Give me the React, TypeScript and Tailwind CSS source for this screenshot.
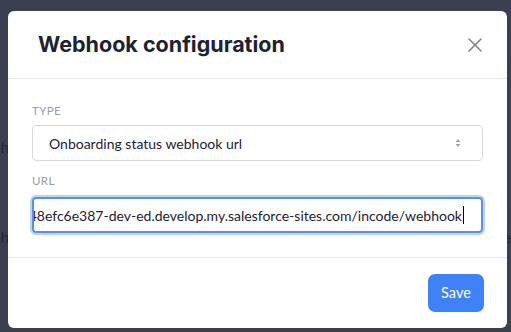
import React from "react"

const titleFont = { fontFamily: "Inter, 'Noto Sans', sans-serif" }
const bodyFont = { fontFamily: "Lato, 'Noto Sans', sans-serif" }

const ChevronUpDown: React.FC = () => (
  <svg width="8" height="12" viewBox="0 0 8 12" fill="#9ca3af">
    <path d="M4 2 L6.5 5 H1.5 Z" />
    <path d="M4 10 L6.5 7 H1.5 Z" />
  </svg>
)

const CloseIcon: React.FC = () => (
  <svg width="16" height="16" viewBox="0 0 16 16" fill="none" stroke="#80848f" strokeWidth="1.6" strokeLinecap="round">
    <path d="M2 2 L14 14 M14 2 L2 14" />
  </svg>
)

export default function App() {
  return (
    <div className="relative w-[511px] h-[332px] overflow-hidden bg-[#3b4051]" style={bodyFont}>
      {/* page behind the overlay */}
      <div className="absolute inset-0 text-[15px] text-[#222634]">
        <div className="absolute right-[502px] top-[136px]">Webh</div>
        <div className="absolute right-[502px] top-[226px]">Webh</div>
        <div className="absolute left-[503px] top-[226px]">e</div>
      </div>

      <div className="absolute left-[8px] top-[11px] w-[499px] rounded-[6px] bg-white">
        <div className="flex h-[68px] items-center justify-between border-b border-[#e8e9ec] pl-[30px] pr-[24px]">
          <h1 className="text-[21.5px] font-bold text-[#1d2233]" style={titleFont}>
            Webhook configuration
          </h1>
          <CloseIcon />
        </div>

        <div className="border-b border-[#e8e9ec] px-[24px] pt-[24px] pb-[24px]">
          <div className="text-[11.5px] leading-[16px] uppercase tracking-[0.4px] text-[#9a9ea6]">Type</div>
          <div className="mt-[6px] flex h-[36px] items-center justify-between rounded-[4px] border border-[#d7d9de] pl-[16px] pr-[20px] text-[14px] text-[#1d2233]">
            <span>Onboarding status webhook url</span>
            <ChevronUpDown />
          </div>

          <div className="mt-[12px] text-[11.5px] leading-[16px] uppercase tracking-[0.4px] text-[#9a9ea6]">Url</div>
          <div className="mt-[8px] flex h-[36px] items-center justify-end overflow-hidden whitespace-nowrap rounded-[4px] border-2 border-[#5b8fe0] pl-[14px] pr-[17px] text-[14px] text-[#1d2233] shadow-[0_0_0_2px_#bcd3f5]">
            <span className="shrink-0">https://incode-demo-00d5e000000c1a2b3c4-d7f148efc6e387-dev-ed.develop.my.salesforce-sites.com/incode/webhook</span>
            <span className="ml-[1px] h-[18px] w-[1px] shrink-0 bg-black" />
          </div>
        </div>

        <div className="flex justify-end px-[23px] py-[16px]">
          <button className="h-[38px] w-[56px] rounded-[7px] bg-[#3f82f8] text-[14.5px] text-white">Save</button>
        </div>
      </div>
    </div>
  )
}
